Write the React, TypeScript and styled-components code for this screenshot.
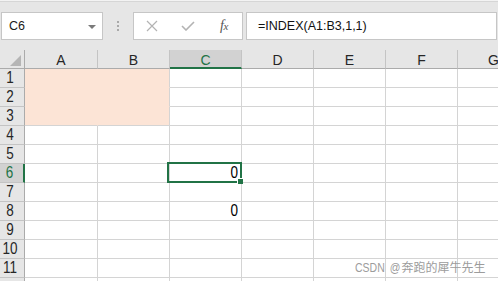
import React from 'react';
import styled, { createGlobalStyle } from 'styled-components';

const Global = createGlobalStyle`
  html, body { margin: 0; padding: 0; background: #ffffff; overflow: hidden; }
  #root { width: 498px; height: 281px; }
`;

const GREEN = '#217346';
const GRID = '#d4d4d4';
const PINK = '#fce4d6';

const Frame = styled.div`
  position: relative;
  width: 498px;
  height: 281px;
  overflow: hidden;
  background: #ffffff;
  font-family: "Liberation Sans", Arial, sans-serif;
`;

const Toolbar = styled.div`
  height: 50px;
  box-sizing: border-box;
  display: flex;
  align-items: flex-start;
  padding: 11px 1px 0 1px;
  background: #e6e6e6;
  border-top: 1px solid #f3f3f3;
  box-shadow: inset 0 1px 0 #d6d6d6;
`;

const NameBox = styled.div`
  width: 102px;
  height: 28px;
  box-sizing: border-box;
  display: flex;
  align-items: center;
  justify-content: space-between;
  padding: 0 6px 0 7px;
  background: #ffffff;
  border: 1px solid #c6c6c6;
  font-size: 12.5px;
  color: #1a1a1a;
`;

const Caret = styled.span`
  width: 0;
  height: 0;
  border-left: 4px solid transparent;
  border-right: 4px solid transparent;
  border-top: 4px solid #7a7a7a;
  margin-top: 1px;
`;

const Separator = styled.div`
  width: 30px;
  height: 28px;
  display: flex;
  flex-direction: column;
  align-items: center;
  justify-content: center;
  gap: 2px;
`;

const Dot = styled.span`
  width: 2px;
  height: 2px;
  background: #a9a9a9;
`;

const FxBox = styled.div`
  width: 110px;
  height: 28px;
  box-sizing: border-box;
  display: grid;
  grid-template-columns: repeat(3, 36px);
  align-items: center;
  justify-items: center;
  background: #ffffff;
  border: 1px solid #c6c6c6;
`;

const FxLabel = styled.span`
  font-family: "Liberation Serif", "Times New Roman", serif;
  font-style: italic;
  font-size: 14px;
  color: #555555;
  letter-spacing: -0.5px;
  & > small {
    font-size: 11px;
  }
`;

const FormulaBox = styled.div`
  flex: 1;
  height: 28px;
  margin-left: 3px;
  box-sizing: border-box;
  display: flex;
  align-items: center;
  padding-left: 11px;
  background: #ffffff;
  border: 1px solid #c6c6c6;
  font-size: 12.5px;
  color: #111111;
`;

const Sheet = styled.div`
  display: grid;
  grid-template-columns: 25px 73px repeat(6, 72px);
  grid-auto-rows: 19px;
  width: 530px;
`;

const Corner = styled.div`
  box-sizing: border-box;
  position: relative;
  background: #e6e6e6;
  border-right: 1px solid #ababab;
  border-bottom: 1px solid #ababab;
  &::after {
    content: '';
    position: absolute;
    right: 3px;
    bottom: 2px;
    width: 0;
    height: 0;
    border-left: 11px solid transparent;
    border-bottom: 11px solid #b5b5b5;
  }
`;

const ColHeader = styled.div<{ $active?: boolean }>`
  box-sizing: border-box;
  display: flex;
  align-items: center;
  justify-content: center;
  padding-top: 2px;
  background: ${(p) => (p.$active ? '#d2d2d2' : '#e6e6e6')};
  border-right: 1px solid #c4c4c4;
  border-bottom: ${(p) => (p.$active ? `2px solid ${GREEN}` : '1px solid #ababab')};
  font-size: 14px;
  color: ${(p) => (p.$active ? GREEN : '#262626')};
`;

const RowHeader = styled.div<{ $active?: boolean }>`
  box-sizing: border-box;
  display: flex;
  align-items: center;
  justify-content: center;
  padding-right: 4px;
  background: ${(p) => (p.$active ? '#d2d2d2' : '#e6e6e6')};
  border-right: ${(p) => (p.$active ? `2px solid ${GREEN}` : '1px solid #ababab')};
  border-bottom: 1px solid #c4c4c4;
  color: ${(p) => (p.$active ? GREEN : '#262626')};
`;

const Digits = styled.span`
  display: inline-block;
  font-size: 13.5px;
  line-height: 1;
  transform: scaleY(1.25);
`;

const Cell = styled.div<{ $bg: string; $right: string; $bottom: string }>`
  position: relative;
  box-sizing: border-box;
  display: flex;
  align-items: flex-end;
  justify-content: flex-end;
  padding: 0 3px 3px 0;
  background: ${(p) => p.$bg};
  border-right: 1px solid ${(p) => p.$right};
  border-bottom: 1px solid ${(p) => p.$bottom};
  color: #000000;
`;

const Selection = styled.div`
  position: absolute;
  left: -3px;
  top: -2px;
  width: 75px;
  height: 21px;
  box-sizing: border-box;
  border: 2px solid ${GREEN};
  z-index: 2;
  pointer-events: none;
`;

const FillHandle = styled.span`
  position: absolute;
  left: 68px;
  top: 14px;
  width: 6px;
  height: 6px;
  box-sizing: border-box;
  background: ${GREEN};
  border-left: 1px solid #ffffff;
  border-top: 1px solid #ffffff;
`;

const Watermark = styled.div`
  position: absolute;
  left: 355px;
  top: 260px;
  display: flex;
  align-items: center;
  height: 14px;
  color: #9c9c9c;
  white-space: nowrap;
  z-index: 3;
`;

const WatermarkLatin = styled.span<{ $gap: number }>`
  display: inline-block;
  font-family: "Liberation Sans", Arial, sans-serif;
  font-size: 10.5px;
  line-height: 1;
  transform: scaleY(1.25);
  margin-right: ${(p) => p.$gap}px;
`;

const WatermarkCjk = styled.span`
  font-family: "Noto Sans CJK SC", sans-serif;
  font-size: 12px;
  line-height: 14px;
`;

const columns = ['A', 'B', 'C', 'D', 'E', 'F', 'G'];
const rowCount = 12;
const labelledRows = 11;
const values: Record<string, string> = { C6: '0', C8: '0' };

const isPink = (c: number, r: number) => c <= 1 && r <= 3;

export default function App() {
  return (
    <Frame>
      <Global />
      <Toolbar>
        <NameBox>
          <span>C6</span>
          <Caret />
        </NameBox>
        <Separator>
          <Dot />
          <Dot />
          <Dot />
        </Separator>
        <FxBox>
          <svg width="12" height="12" viewBox="0 0 12 12">
            <path d="M1 1 L11 11 M11 1 L1 11" stroke="#b3b3b3" strokeWidth="1.2" fill="none" />
          </svg>
          <svg width="14" height="10" viewBox="0 0 14 10">
            <path d="M1 5 L5 9 L13 1" stroke="#b3b3b3" strokeWidth="1.6" fill="none" />
          </svg>
          <FxLabel>
            f<small>x</small>
          </FxLabel>
        </FxBox>
        <FormulaBox>=INDEX(A1:B3,1,1)</FormulaBox>
      </Toolbar>
      <Sheet>
        <Corner />
        {columns.map((c) => (
          <ColHeader key={c} $active={c === 'C'}>
            {c}
          </ColHeader>
        ))}
        {Array.from({ length: rowCount }, (_, i) => i + 1).map((r) => (
          <React.Fragment key={r}>
            <RowHeader $active={r === 6}>
              {r <= labelledRows && <Digits>{r}</Digits>}
            </RowHeader>
            {columns.map((c, ci) => {
              const pink = isPink(ci, r);
              const right = pink && ci === 0 ? PINK : GRID;
              const bottom = pink && r < 3 ? PINK : GRID;
              const key = `${c}${r}`;
              const v = values[key];
              return (
                <Cell key={key} $bg={pink ? PINK : '#ffffff'} $right={right} $bottom={bottom}>
                  {v !== undefined && <Digits>{v}</Digits>}
                  {key === 'C6' && (
                    <Selection>
                      <FillHandle />
                    </Selection>
                  )}
                </Cell>
              );
            })}
          </React.Fragment>
        ))}
      </Sheet>
      <Watermark>
        <WatermarkLatin $gap={5}>CSDN</WatermarkLatin>
        <WatermarkLatin $gap={1}>@</WatermarkLatin>
        <WatermarkCjk>奔跑的犀牛先生</WatermarkCjk>
      </Watermark>
    </Frame>
  );
}
